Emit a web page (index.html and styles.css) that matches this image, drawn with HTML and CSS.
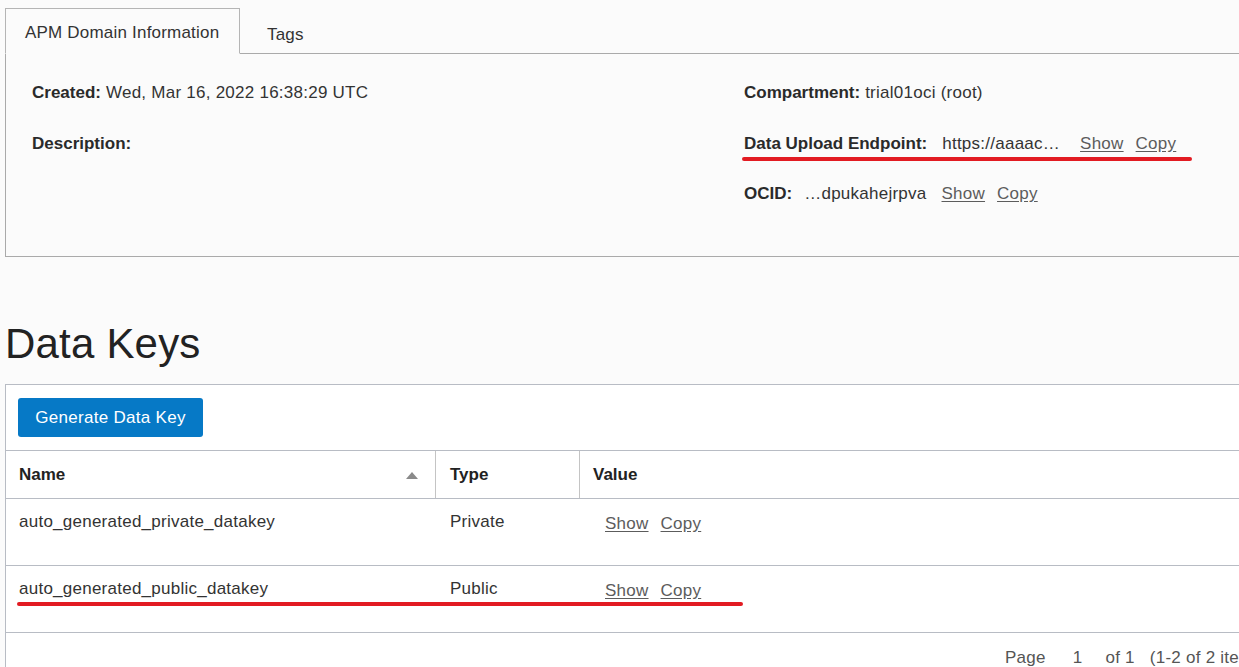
FILE: index.html
```html
<!DOCTYPE html>
<html>
<head>
<meta charset="utf-8">
<link rel="stylesheet" href="styles.css">
</head>
<body>
<div class="page">
  <div class="tabs">
    <div class="tab active">APM Domain Information</div>
    <div class="tab">Tags</div>
    <div class="tab-fill"></div>
  </div>
  <div class="panel">
    <div class="col left">
      <div class="field"><b>Created:</b> Wed, Mar 16, 2022 16:38:29 UTC</div>
      <div class="field"><b>Description:</b></div>
    </div>
    <div class="col right">
      <div class="field"><b>Compartment:</b> trial01oci (root)</div>
      <div class="field marked">
        <b>Data Upload Endpoint:</b><span class="val v-endpoint">https://aaaac…</span><a class="lnk">Show</a><a class="lnk">Copy</a>
        <span class="redline red-endpoint"></span>
      </div>
      <div class="field"><b>OCID:</b><span class="val v-ocid">…dpukahejrpva</span><a class="lnk">Show</a><a class="lnk">Copy</a></div>
    </div>
  </div>

  <h1 class="title">Data Keys</h1>

  <div class="table-box">
    <div class="toolbar">
      <button class="btn">Generate Data Key</button>
    </div>
    <div class="row head">
      <div class="cell c-name">Name<span class="sort"></span></div>
      <div class="cell c-type">Type</div>
      <div class="cell c-val">Value</div>
    </div>
    <div class="row">
      <div class="cell c-name">auto_generated_private_datakey</div>
      <div class="cell c-type">Private</div>
      <div class="cell c-val"><a class="lnk">Show</a><a class="lnk">Copy</a></div>
    </div>
    <div class="row second">
      <div class="cell c-name">auto_generated_public_datakey</div>
      <div class="cell c-type">Public</div>
      <div class="cell c-val"><a class="lnk">Show</a><a class="lnk">Copy</a></div>
      <span class="redline red-row"></span>
    </div>
    <div class="pager">
      <span class="pg-label">Page</span><span class="pg-num">1</span><span class="pg-of">of 1</span><span class="pg-items">(1-2 of 2 items)</span>
    </div>
  </div>
</div>
</body>
</html>
```

FILE: styles.css
```css
html, body {
  margin: 0;
  padding: 0;
  overflow: hidden;
  background: #fbfbfb;
}
body {
  font-family: "Liberation Sans", Arial, sans-serif;
  font-size: 17px;
  letter-spacing: 0.25px;
  color: #333;
}
.page {
  width: 1300px;
  padding: 8px 0 0 5px;
}
.tabs {
  display: flex;
  height: 46px;
}
.tab {
  box-sizing: border-box;
  height: 46px;
  padding: 15px 20px 0 20px;
  font-size: 17px;
  letter-spacing: 0.2px;
  white-space: nowrap;
  color: #333;
  border-bottom: 1px solid #aaa;
}
.tab.active {
  width: 235px;
  border: 1px solid #b5b5b5;
  border-bottom: 1px solid #fbfbfb;
  padding: 14px 0 0 19px;
}
.tab:nth-child(2) {
  padding-left: 27px;
  padding-top: 17px;
}
.tab-fill {
  flex: 1;
  border-bottom: 1px solid #aaa;
}
.panel {
  box-sizing: border-box;
  height: 203px;
  border-left: 1px solid #aaa;
  border-bottom: 1px solid #aaa;
  display: flex;
  padding: 29px 0 0 26px;
}
.col {
  display: flex;
  flex-direction: column;
  gap: 30.5px;
}
.col.left { width: 712px; }
.field {
  position: relative;
  height: 20px;
  line-height: 20px;
  white-space: nowrap;
  color: #333;
}
.field b {
  font-weight: bold;
  letter-spacing: 0;
  color: #2a2a2a;
}
.val { margin-left: 12px; }
.v-endpoint { margin-left: 15px; margin-right: 20px; }
.v-ocid { margin-right: 15px; }
.lnk {
  color: #5c5c5c;
  text-decoration: underline;
  text-underline-offset: 2px;
  margin-right: 12px;
}
.redline {
  position: absolute;
  height: 4px;
  border-radius: 2px;
  background: #e21b22;
}
.red-endpoint {
  left: -2px;
  width: 450px;
  top: 23px;
}
.title {
  margin: 63px 0 0 0;
  font-size: 42px;
  letter-spacing: 0.2px;
  font-weight: normal;
  line-height: 48px;
  color: #222;
}
.table-box {
  margin-top: 16px;
  border-top: 1px solid #b8bcc4;
  border-left: 1px solid #b8bcc4;
  background: #fff;
  height: 300px;
}
.toolbar {
  padding: 13px 0 13px 12px;
  border-bottom: 1px solid #b8bcc4;
}
.btn {
  height: 39px;
  width: 185px;
  border: none;
  border-radius: 3px;
  background: #0679c6;
  color: #fff;
  font-family: "Liberation Sans", Arial, sans-serif;
  font-size: 17px;
  letter-spacing: 0.3px;
  padding: 0;
}
.row {
  position: relative;
  display: flex;
  height: 66px;
  border-bottom: 1px solid #b8bcc4;
}
.row.head {
  height: 47px;
  border-bottom: 1px solid #b8bcc4;
}
.row.head .cell {
  font-weight: bold;
  letter-spacing: 0;
  color: #222;
  padding-top: 14px;
  border-right: 1px solid #c4c4c4;
}
.row.head .c-val { border-right: none; padding-left: 13px; }
.row.second {
  border-top: 1px solid #b8bcc4;
  margin-top: -1px;
}
.cell {
  box-sizing: border-box;
  padding: 13px 0 0 13px;
  line-height: 20px;
  color: #333;
  position: relative;
}
.c-name { width: 430px; }
.c-type { width: 144px; padding-left: 14px; }
.c-val { flex: 1; padding-left: 25px; }
.row:not(.head) .c-val { padding-top: 15px; }
.row:not(.head) .c-val .lnk { margin-right: 12px; }
.sort {
  position: absolute;
  right: 17px;
  top: 21px;
  width: 0;
  height: 0;
  border-left: 6px solid transparent;
  border-right: 6px solid transparent;
  border-bottom: 7px solid #8a8a8a;
}
.red-row {
  left: 11px;
  width: 726px;
  top: 36px;
}
.pager {
  padding: 15px 0 0 999px;
  white-space: nowrap;
  color: #555;
  line-height: 20px;
}
.pg-num { margin-left: 27px; margin-right: 23px; }
.pg-of { margin-right: 15px; }
```
